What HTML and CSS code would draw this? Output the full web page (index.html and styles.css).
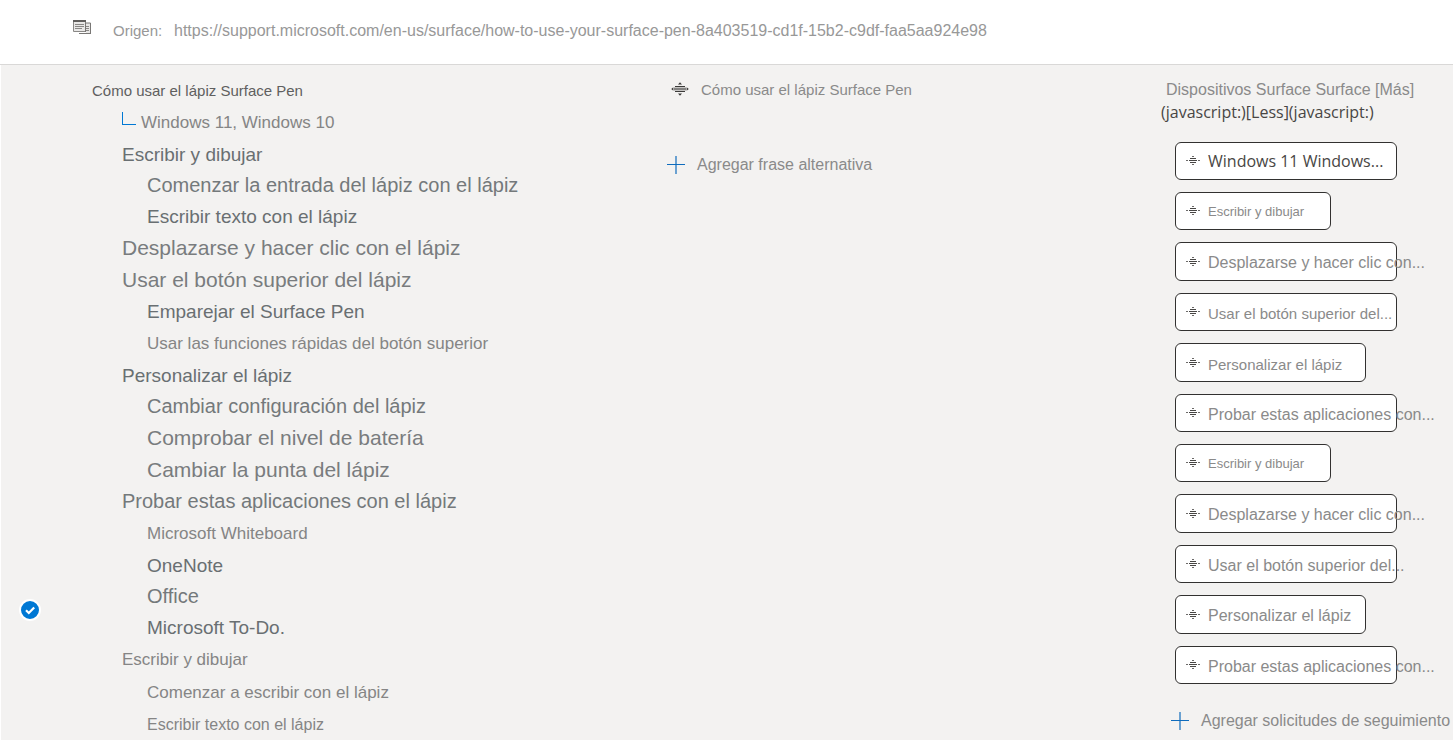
FILE: index.html
```html
<!DOCTYPE html>
<html lang="es">
<head>
<meta charset="utf-8">
<meta name="viewport" content="width=device-width, initial-scale=1">
<title>Cómo usar el lápiz Surface Pen</title>
<link rel="stylesheet" href="styles.css">
</head>
<body>
<svg class="sprite" aria-hidden="true">
  <symbol id="voice" viewBox="0 0 18 14">
    <path d="M4 4.500h10M4 9.500h10" stroke="currentColor" stroke-width="1.200"/>
    <path d="M3 7h12" stroke="currentColor" stroke-width="2.800" opacity=".6"/>
    <path d="M9 .2l2 2.200H7zM9 13.800l2-2.200H7zM.2 7l2.200-1.800v3.600zM17.800 7l-2.200-1.800v3.600z" fill="currentColor"/>
  </symbol>
  <symbol id="wave" viewBox="0 0 14 11">
    <path d="M4 3.500h6M3 5.500h8M4 7.500h6" stroke="currentColor" stroke-width="1.200"/>
    <path d="M6 1.500h2M6 9.500h2M0 5.500h2M12 5.500h2" stroke="currentColor" stroke-width="1" opacity=".8"/>
  </symbol>
  <symbol id="plus" viewBox="0 0 18 18">
    <path d="M9 0v18" stroke="currentColor" stroke-width="1.500" opacity=".8"/>
    <path d="M0 8.500h18" stroke="currentColor"/>
  </symbol>
</svg>

<header class="source">
  <svg class="source-icon" viewBox="0 0 18 15" aria-hidden="true">
    <path d="M.5 1.500h12v10H.5z" fill="#e8e7e6" stroke="#8a8886"/>
    <path d="M0 1h13" stroke="#605e5c" stroke-width="2"/>
    <path d="M2 4.500h9M2 6.500h9M2 8.500h7" stroke="#8a8886"/>
    <path d="M13 3h4.500v10.500H13z" fill="#e8e7e6"/>
    <path d="M12 3h5.500v11M12.500 3v9" fill="none" stroke="#797775"/>
    <path d="M13 6.500h3M13 8.500h3M13 10.500h3" stroke="#8a8886"/>
    <path d="M6 13.500h12" stroke="#797775"/>
  </svg>
  <span class="source-label">Origen:</span>
  <a class="source-link" href="https://support.microsoft.com/en-us/surface/how-to-use-your-surface-pen-8a403519-cd1f-15b2-c9df-faa5aa924e98">https://support.microsoft.com/en-us/surface/how-to-use-your-surface-pen-8a403519-cd1f-15b2-c9df-faa5aa924e98</a>
</header>

<main class="board">
  <div class="gutter">
    <label class="check">
      <input class="check-box" type="checkbox" checked aria-label="Seleccionar fila">
      <svg class="check-mark" viewBox="0 0 18 18" aria-hidden="true"><path d="M5 9.300l2.800 2.700L13.200 6.500" fill="none" stroke="#fff" stroke-width="2.200"/></svg>
    </label>
  </div>

  <ul class="tree">
    <li class="node root">Cómo usar el lápiz Surface Pen</li>
    <li class="node l1 light"><span class="elbow"></span>Windows 11, Windows 10</li>
    <li class="node l1 strong">Escribir y dibujar</li>
    <li class="node l2 large">Comenzar la entrada del lápiz con el lápiz</li>
    <li class="node l2 strong">Escribir texto con el lápiz</li>
    <li class="node l1 xlarge">Desplazarse y hacer clic con el lápiz</li>
    <li class="node l1 xlarge">Usar el botón superior del lápiz</li>
    <li class="node l2 strong">Emparejar el Surface Pen</li>
    <li class="node l2 light">Usar las funciones rápidas del botón superior</li>
    <li class="node l1 strong">Personalizar el lápiz</li>
    <li class="node l2 large">Cambiar configuración del lápiz</li>
    <li class="node l2 xlarge">Comprobar el nivel de batería</li>
    <li class="node l2 xlarge">Cambiar la punta del lápiz</li>
    <li class="node l1 large">Probar estas aplicaciones con el lápiz</li>
    <li class="node l2 light">Microsoft Whiteboard</li>
    <li class="node l2 strong">OneNote</li>
    <li class="node l2 large">Office</li>
    <li class="node l2 strong">Microsoft To-Do.</li>
    <li class="node l1 light">Escribir y dibujar</li>
    <li class="node l2 light">Comenzar a escribir con el lápiz</li>
    <li class="node l2 light small">Escribir texto con el lápiz</li>
  </ul>

  <section class="phrases">
    <p class="phrase"><svg class="voice" aria-hidden="true"><use href="#voice"/></svg>Cómo usar el lápiz Surface Pen</p>
    <button class="add" type="button"><svg class="plus" aria-hidden="true"><use href="#plus"/></svg>Agregar frase alternativa</button>
  </section>

  <section class="answer">
    <p class="answer-title">Dispositivos Surface Surface [Más]</p>
    <p class="answer-code">(javascript:)[Less](javascript:)</p>
    <div class="chips">
      <button class="chip wide ui" type="button"><svg class="wave" aria-hidden="true"><use href="#wave"/></svg>Windows 11 Windows...</button>
      <button class="chip narrow" type="button"><svg class="wave" aria-hidden="true"><use href="#wave"/></svg>Escribir y dibujar</button>
      <button class="chip wide tall big" type="button"><svg class="wave" aria-hidden="true"><use href="#wave"/></svg><span class="chip-text">Desplazarse y hacer clic con...</span></button>
      <button class="chip wide" type="button"><svg class="wave" aria-hidden="true"><use href="#wave"/></svg><span class="chip-text">Usar el botón superior del...</span></button>
      <button class="chip medium tall" type="button"><svg class="wave" aria-hidden="true"><use href="#wave"/></svg><span class="chip-text">Personalizar el lápiz</span></button>
      <button class="chip wide big" type="button"><svg class="wave" aria-hidden="true"><use href="#wave"/></svg><span class="chip-text">Probar estas aplicaciones con...</span></button>
      <button class="chip narrow" type="button"><svg class="wave" aria-hidden="true"><use href="#wave"/></svg>Escribir y dibujar</button>
      <button class="chip wide tall big" type="button"><svg class="wave" aria-hidden="true"><use href="#wave"/></svg><span class="chip-text">Desplazarse y hacer clic con...</span></button>
      <button class="chip wide big" type="button"><svg class="wave" aria-hidden="true"><use href="#wave"/></svg><span class="chip-text">Usar el botón superior del...</span></button>
      <button class="chip medium tall big" type="button"><svg class="wave" aria-hidden="true"><use href="#wave"/></svg><span class="chip-text">Personalizar el lápiz</span></button>
      <button class="chip wide big" type="button"><svg class="wave" aria-hidden="true"><use href="#wave"/></svg><span class="chip-text">Probar estas aplicaciones con...</span></button>
    </div>
    <button class="add follow" type="button"><svg class="plus" aria-hidden="true"><use href="#plus"/></svg>Agregar solicitudes de seguimiento</button>
  </section>
</main>
</body>
</html>
```
FILE: styles.css
```css
* { box-sizing: border-box; }

body {
  margin: 0;
  min-height: 100vh;
  display: flex;
  flex-direction: column;
  background: #fff;
  color: #8a8a8a;
  font-family: "Liberation Sans", Arial, sans-serif;
  font-size: 16px;
  overflow-x: hidden;
}

p, ul { margin: 0; padding: 0; }

button {
  margin: 0;
  font: inherit;
  color: inherit;
  text-align: left;
  white-space: nowrap;
  cursor: pointer;
}

.sprite { position: absolute; width: 0; height: 0; }

/* Source bar */
.source {
  display: flex;
  align-items: center;
  padding: 0 16px 3px 73px;
  height: 65px;
  border-bottom: 1px solid #d9d8d7;
  color: #989898;
}
.source-icon { width: 18px; height: 15px; margin: 0 22px 6px 0; }
.source-label { width: 61px; font-size: 15px; }
.source-link { color: inherit; text-decoration: none; white-space: nowrap; }

/* Columns */
.board {
  flex: 1;
  display: grid;
  grid-template-columns: 91px minmax(0, 575fr) minmax(0, 494fr) minmax(0, 292fr);
  border-left: 1px solid #fff;
  background: #f3f2f1;
}

.gutter { padding: 534px 0 0 18px; }
.check {
  display: grid;
  width: 22px;
  height: 22px;
}
.check-box, .check-mark { grid-area: 1 / 1; width: 22px; height: 22px; margin: 0; }
.check-box {
  appearance: none;
  border: 2px solid #fff;
  border-radius: 50%;
  background: #0078d4;
}
.check-mark { padding: 2px; pointer-events: none; }

/* Topic tree */
.tree { padding-top: 10px; list-style: none; }
.node {
  display: flex;
  align-items: center;
  height: 32px;
  color: #7c8082;
  white-space: nowrap;
}
.root { font-size: 15px; height: 31px; color: #5f5f5f; }
.l1 { padding-left: 30px; }
.l2 { padding-left: 55px; }
.light { font-size: 17px; height: 33px; color: #858585; }
.strong { font-size: 19px; height: 31px; color: #696f72; }
.large { font-size: 20px; height: 31px; color: #74797b; }
.xlarge { font-size: 21px; color: #797c7e; }
.small { font-size: 16px; height: 31px; }
.elbow {
  width: 14px;
  height: 13px;
  margin: 0 5px 8px 0;
  border: solid #0078d4;
  border-width: 0 0 1px 1px;
}

/* Alternative phrases */
.phrases { padding-top: 13px; }
.phrase {
  display: flex;
  align-items: center;
  gap: 12px;
  height: 22px;
  padding-left: 4px;
  font-size: 15px;
}
.voice { width: 18px; height: 14px; color: #3b3a39; }
.add {
  display: flex;
  align-items: center;
  gap: 12px;
  height: 22px;
  margin-top: 54px;
  padding: 0;
  border: 0;
  background: none;
}
.plus { flex: none; width: 18px; height: 18px; color: #0f6cbd; }

/* Follow-up prompts */
.answer { padding-top: 14px; }
.answer-title { padding-left: 5px; line-height: 22px; white-space: nowrap; }
.answer-code {
  font-family: "Open Sans", "Noto Sans", sans-serif;
  line-height: 22px;
  color: #484644;
}
.chips {
  display: flex;
  flex-direction: column;
  gap: 12px;
  padding: 19px 0 0 14px;
}
.chip {
  display: flex;
  align-items: center;
  gap: 8px;
  height: 38px;
  padding: 0 10px;
  border: 1px solid #323130;
  border-radius: 6px;
  background: #fff;
  font-size: 15px;
}
.chip-text { padding-top: 3px; }
.wide { width: 222px; }
.medium { width: 191px; }
.narrow { width: 156px; font-size: 13px; }
.tall { height: 39px; }
.big { font-size: 16px; }
.ui { font-family: "Open Sans", "Noto Sans", sans-serif; font-size: 16px; color: #484644; }
.wave { flex: none; width: 14px; height: 11px; margin-bottom: 1px; color: #484644; }
.follow { margin: 26px 0 0 10px; }
```
